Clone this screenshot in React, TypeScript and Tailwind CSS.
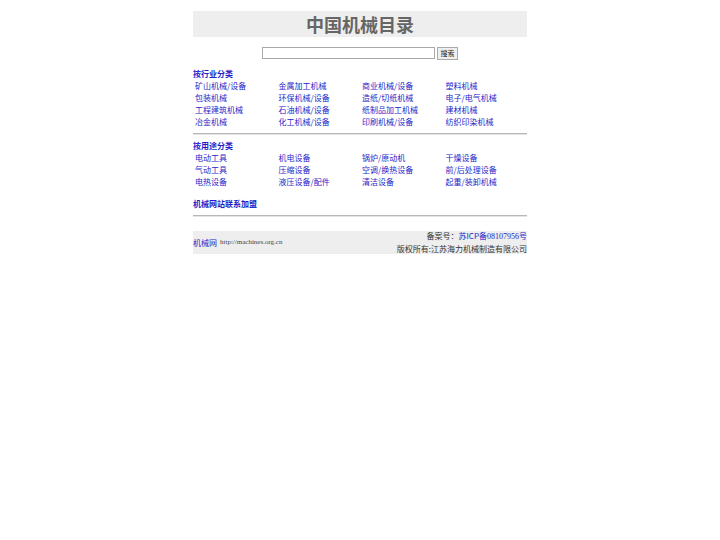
const industry = [
  ['矿山机械/设备', '金属加工机械', '商业机械/设备', '塑料机械'],
  ['包装机械', '环保机械/设备', '造纸/切纸机械', '电子/电气机械'],
  ['工程建筑机械', '石油机械/设备', '纸制品加工机械', '建材机械'],
  ['冶金机械', '化工机械/设备', '印刷机械/设备', '纺织印染机械'],
];

const usage = [
  ['电动工具', '机电设备', '锅炉/原动机', '干燥设备'],
  ['气动工具', '压缩设备', '空调/换热设备', '前/后处理设备'],
  ['电热设备', '液压设备/配件', '清洁设备', '起重/装卸机械'],
];

function LinkGrid({ rows }: { rows: string[][] }) {
  return (
    <div>
      {rows.map((row, i) => (
        <div key={i} className="grid grid-cols-4 h-[12px]">
          {row.map((t) => (
            <a key={t} href="#" className="pl-[2px] text-[8px] leading-[12px] text-[#2626c8] whitespace-nowrap">
              {t}
            </a>
          ))}
        </div>
      ))}
    </div>
  );
}

function Rule() {
  return <div className="h-px bg-[#b8b8b8] border-b border-[#e4e4e4] box-content" />;
}

export default function App() {
  return (
    <div className="min-h-screen bg-white" style={{ fontFamily: '"Noto Sans CJK SC", "Liberation Sans", sans-serif' }}>
      <div className="w-[334px] mx-auto pt-[11px]">
        {/* title */}
        <div className="h-[26px] bg-[#eeeeee] flex items-center justify-center">
          <h1 className="text-[18px] font-bold text-[#666666] leading-none">中国机械目录</h1>
        </div>

        {/* search */}
        <div className="mt-[9px] h-[14px] flex items-center justify-center gap-[2px]">
          <input type="text" className="w-[173px] h-[12px] border border-[#a9a9a9] bg-white" />
          <button className="h-[13px] w-[21px] border border-[#aaaaaa] bg-[#efefef] text-[7px] leading-none text-[#222]">搜索</button>
        </div>

        {/* industry */}
        <div className="mt-[8px] h-[12px] text-[8px] leading-[12px] font-bold text-[#1e1ec8]">按行业分类</div>
        <LinkGrid rows={industry} />
        <div className="mt-[5px]">
          <Rule />
        </div>

        {/* usage */}
        <div className="mt-[5px] h-[12px] text-[8px] leading-[12px] font-bold text-[#1e1ec8]">按用途分类</div>
        <LinkGrid rows={usage} />

        <div className="mt-[10px] h-[12px] text-[8px] leading-[12px] font-bold text-[#1e1ec8]">机械网站联系加盟</div>
        <div className="mt-[5px]">
          <Rule />
        </div>

        {/* footer */}
        <div className="mt-[14px] h-[23px] bg-[#eeeeee] flex items-center justify-between">
          <div className="flex items-center gap-[3px] text-[8px]">
            <a href="#" className="text-[#2626c8]">机械网</a>
            <span className="text-[7px] text-[#444]" style={{ fontFamily: '"Liberation Serif", serif' }}>http://machines.org.cn</span>
          </div>
          <div className="text-right text-[8px] leading-[12px] text-[#333]">
            <div>
              备案号：<a href="#" className="text-[#2626c8]">苏ICP备<span style={{ fontFamily: '"Liberation Serif", serif' }}>08107956</span>号</a>
            </div>
            <div>版权所有:江苏海力机械制造有限公司</div>
          </div>
        </div>
      </div>
    </div>
  );
}
